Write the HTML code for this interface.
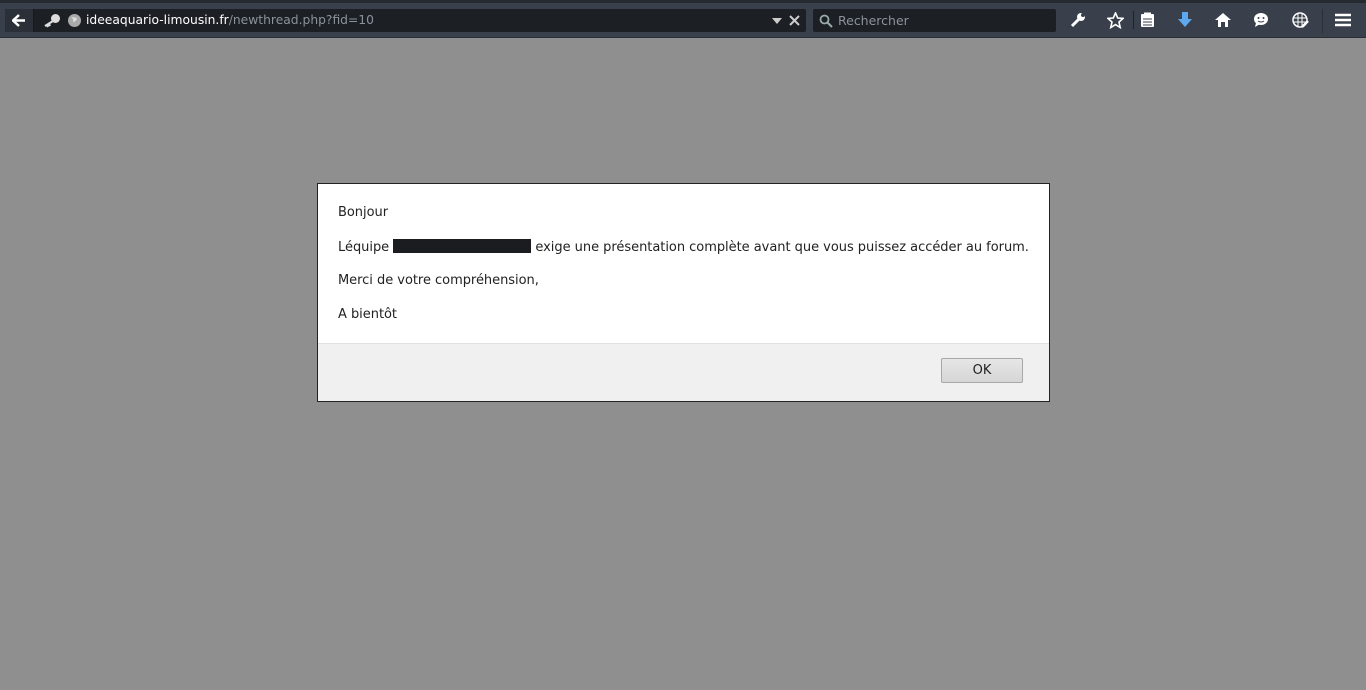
<!DOCTYPE html>
<html><head><meta charset="utf-8"><style>
*{margin:0;padding:0;box-sizing:border-box}
body{width:1366px;height:690px;background:#8f8f8f;font-family:"DejaVu Sans","Liberation Sans",sans-serif;position:relative;overflow:hidden}
#tabs{position:absolute;left:0;top:0;width:1366px;height:3px;background:#252a31}
#bar{position:absolute;left:0;top:3px;width:1366px;height:35px;background:#39404b;border-bottom:1px solid #2a2f36}
#url{position:absolute;left:5px;top:6px;width:801px;height:23px;background:#1c1f24;border-radius:2px}
#back{position:absolute;left:5px;top:6px;width:29px;height:23px;background:#2b3038;border-right:1px solid #15181c}
#url .t{position:absolute;left:81px;top:4px;font-size:12.3px;color:#fff;white-space:nowrap}
#url .t span{color:#8b929a}
#search{position:absolute;left:813px;top:6px;width:243px;height:23px;background:#1c1f24;border-radius:2px}
#search span{position:absolute;left:25px;top:4px;font-size:12.5px;color:#8b929a}
.ic{position:absolute;top:9px}
#dlg{position:absolute;left:317px;top:183px;width:733px;height:219px;background:#fff;border:1px solid #222}
#dlg p{position:absolute;left:20px;font-size:13px;color:#222;white-space:nowrap;letter-spacing:-0.03px}
#foot{position:absolute;left:0;top:159px;width:731px;height:58px;background:#f0f0f0;border-top:1px solid #e0e0e0}
#ok{position:absolute;left:623px;top:14px;width:82px;height:25px;border:1px solid #a8a8a8;border-radius:2px;background:linear-gradient(#e6e6e6,#d6d6d6);font-size:13px;text-align:center;line-height:24px;color:#222}
</style></head><body>
<div id="tabs"></div>
<div id="bar">
<div id="url"><div class="t">ideeaquario-limousin.fr<span>/newthread.php?fid=10</span></div>
<svg style="position:absolute;left:38px;top:4px" width="18" height="15"><circle cx="12.5" cy="5.5" r="4.5" fill="#ddd"/><path d="M10 8 L2 13 M4 12 l1 2 M6 11 l1 2" stroke="#ddd" stroke-width="2.2"/></svg>
<svg style="position:absolute;left:62px;top:4px" width="15" height="15"><circle cx="7.5" cy="7.5" r="6.5" fill="#aaa"/><path d="M4 4 q3 2 2 5 q3 0 4-4" fill="#ddd"/></svg>
<svg style="position:absolute;left:766px;top:8px" width="12" height="8"><path d="M1 1 h10 l-5 6z" fill="#ccc"/></svg>
<svg style="position:absolute;left:784px;top:6px" width="11" height="11"><path d="M1 1 L10 10 M10 1 L1 10" stroke="#ccc" stroke-width="2"/></svg>
</div>
<div id="back"><svg style="position:absolute;left:7px;top:5px" width="14" height="13"><path d="M7 1 L1 6.5 L7 12 M1 6.5 H13" stroke="#fff" stroke-width="2.5" fill="none"/></svg></div>
<div id="search"><svg style="position:absolute;left:6px;top:5px" width="14" height="14"><circle cx="5.5" cy="5.5" r="4" stroke="#9aa" stroke-width="1.8" fill="none"/><path d="M8.5 8.5 L13 13" stroke="#9aa" stroke-width="2"/></svg><span>Rechercher</span></div>
<svg class="ic" style="left:1070px" width="16" height="16"><path d="M2 14 L9 7" stroke="#fff" stroke-width="3"/><circle cx="11" cy="5" r="4" fill="#fff"/><circle cx="13" cy="3" r="2" fill="#39404b"/></svg>
<svg class="ic" style="left:1107px" width="17" height="17"><path d="M8.5 1 L10.7 6 L16 6.4 L12 10 L13.2 15.5 L8.5 12.6 L3.8 15.5 L5 10 L1 6.4 L6.3 6Z" stroke="#fff" stroke-width="1.6" fill="none"/></svg>
<div style="position:absolute;left:1133px;top:8px;width:1px;height:18px;background:#222"></div>
<svg class="ic" style="left:1140px" width="15" height="16"><rect x="1" y="2" width="13" height="13" rx="1" fill="#fff"/><rect x="4" y="0.5" width="7" height="3" fill="#fff"/><path d="M3 7h9M3 10h9M3 13h9" stroke="#39404b"/></svg>
<svg class="ic" style="left:1177px" width="16" height="16"><path d="M5 0 h6 v7 h4 l-7 8 l-7-8 h4z" fill="#5ea8f0"/></svg>
<svg class="ic" style="left:1215px" width="16" height="16"><path d="M8 1 L16 8 H13 V15 H10 V10 H6 V15 H3 V8 H0Z" fill="#fff"/></svg>
<svg class="ic" style="left:1253px" width="16" height="16"><ellipse cx="8" cy="7" rx="7" ry="6" fill="#fff"/><path d="M3 11 L2 15 L7 12" fill="#fff"/><circle cx="5.5" cy="6" r="1" fill="#39404b"/><circle cx="10.5" cy="6" r="1" fill="#39404b"/><path d="M5 9 q3 2 6 0" stroke="#39404b" fill="none"/></svg>
<svg class="ic" style="left:1292px" width="17" height="17"><circle cx="8" cy="8" r="7" stroke="#fff" stroke-width="1.5" fill="none"/><path d="M2 6h12M2 10h12M6 1v14M10 1v14" stroke="#fff"/><path d="M10 15 L16 9" stroke="#fff" stroke-width="2.5"/></svg>
<div style="position:absolute;left:1322px;top:6px;width:1px;height:24px;background:#2b3038"></div>
<svg class="ic" style="left:1335px;top:10px" width="16" height="14"><path d="M0 2h16M0 7h16M0 12h16" stroke="#fff" stroke-width="2.5"/></svg>
</div>
<div id="dlg">
<p style="top:21px">Bonjour</p>
<p style="top:55px">Léquipe <span style="display:inline-block;width:138px;height:14px;background:#1a1c20;vertical-align:-2px"></span> exige une présentation complète avant que vous puissez accéder au forum.</p>
<p style="top:89px">Merci de votre compréhension,</p>
<p style="top:123px">A bientôt</p>
<div id="foot"><div id="ok">OK</div></div>
</div>
</body></html>
